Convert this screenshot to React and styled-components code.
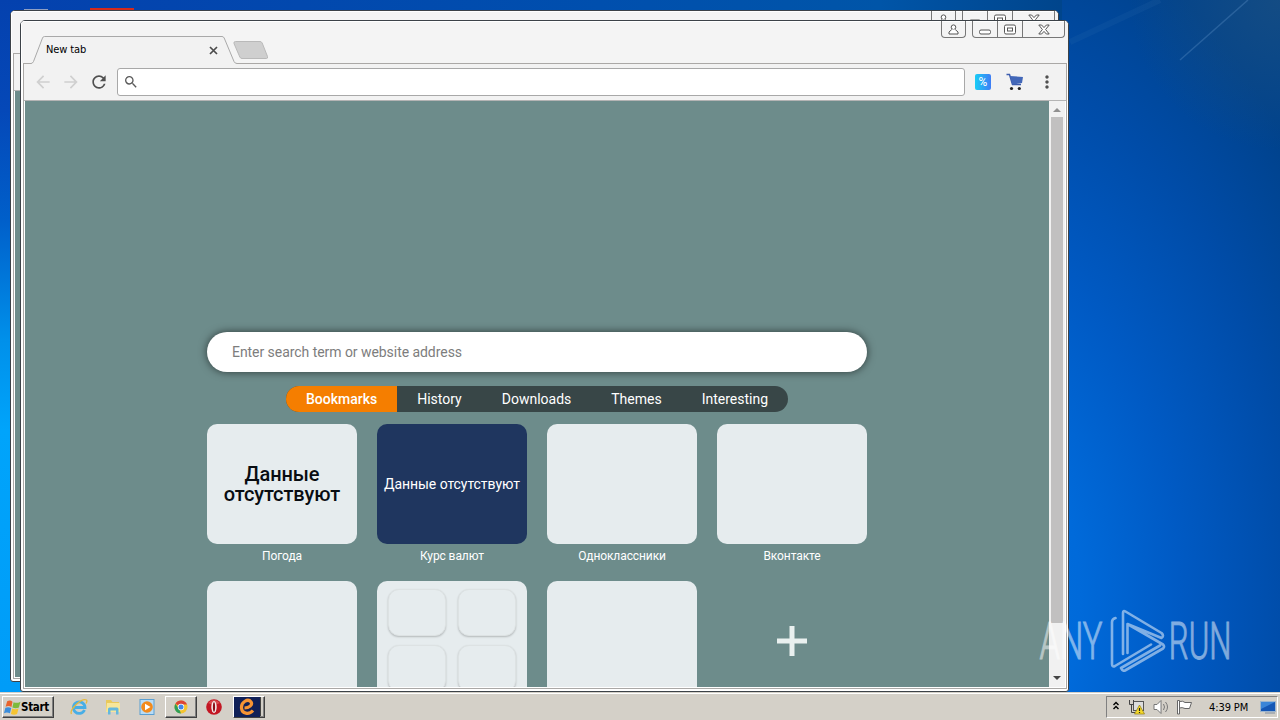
import React from 'react';
import styled, { createGlobalStyle } from 'styled-components';
import { MdArrowBack, MdArrowForward, MdRefresh, MdSearch, MdMoreVert } from 'react-icons/md';

const menus = ['Bookmarks', 'History', 'Downloads', 'Themes', 'Interesting'];

const bookmarks = [
  { id: 1, title: 'Погода', type: 'weather' },
  { id: 2, title: 'Курс валют', type: 'rates' },
  { id: 3, title: 'Одноклассники' },
  { id: 4, title: 'Вконтакте' },
  { id: 5, title: '' },
  { id: 6, title: '', type: 'folder' },
  { id: 7, title: '' },
  { id: 8, title: '', type: 'add' },
];

const WindowButtons = () => (
  <Controls>
    <ControlGroup>
      <Control $width={23}>
        <svg width="11" height="11" viewBox="0 0 11 11">
          <circle cx="5.5" cy="3.2" r="2.3" />
          <path d="M3.8 5.5 L1 8 V10 H10 V8 L7.2 5.5" />
        </svg>
      </Control>
    </ControlGroup>
    <ControlGroup>
      <Control $width={24}>
        <svg width="12" height="11" viewBox="0 0 12 11">
          <rect x="0.5" y="6" width="11" height="4" rx="1.5" />
        </svg>
      </Control>
      <Control $width={25}>
        <svg width="12" height="11" viewBox="0 0 12 11">
          <rect x="0.5" y="1" width="11" height="9" rx="1.5" />
          <rect x="3.5" y="4" width="5" height="3" />
        </svg>
      </Control>
      <Control $width={42}>
        <svg width="12" height="11" viewBox="0 0 12 11">
          <path d="M0.8 1 H3.6 L6 3.6 L8.4 1 H11.2 L7.6 5.5 L11.2 10 H8.4 L6 7.4 L3.6 10 H0.8 L4.4 5.5 Z" />
        </svg>
      </Control>
    </ControlGroup>
  </Controls>
);

const Tile = ({ bookmark }) => {
  if (bookmark.type === 'add') {
    return (
      <AddTile>
        <svg width="30" height="30" viewBox="0 0 30 30">
          <path d="M15 0 V30 M0 15 H30" stroke="#e9f0ef" strokeWidth="5" />
        </svg>
      </AddTile>
    );
  }

  return (
    <div>
      <Thumb $type={bookmark.type}>
        {bookmark.type === 'weather' && <strong>Данные отсутствуют</strong>}
        {bookmark.type === 'rates' && <span>Данные отсутствуют</span>}
        {bookmark.type === 'folder' && [1, 2, 3, 4].map((n) => <FolderItem key={n} />)}
      </Thumb>
      <TileTitle>{bookmark.title}</TileTitle>
    </div>
  );
};

const NewTabPage = () => (
  <>
    <SearchBox placeholder="Enter search term or website address" />
    <Menu>
      {menus.map((menu) => (
        <MenuItem key={menu} $active={menu === 'Bookmarks'}>{menu}</MenuItem>
      ))}
    </Menu>
    <Tiles>
      {bookmarks.map((bookmark) => (
        <Tile key={bookmark.id} bookmark={bookmark} />
      ))}
    </Tiles>
  </>
);

const BrowserTab = () => (
  <>
    <Tab>
      <TabShape width="206" height="28" viewBox="0 0 206 28">
        <path d="M0 28 V27.5 Q1.5 27.5 2.5 25.5 L11.5 2 Q12 0.5 13.5 0.5 H191 Q192.5 0.5 193.2 2 L203 25.5 Q204 27.5 206 27.5 V28 Z" fill="#f2f2f2" />
        <path d="M0 27.5 Q1.5 27.5 2.5 25.5 L11.5 2 Q12 0.5 13.5 0.5 H191 Q192.5 0.5 193.2 2 L203 25.5 Q204 27.5 206 27.5" fill="none" stroke="#a9a9a9" />
      </TabShape>
      <TabTitle>New tab</TabTitle>
      <CloseIcon width="9" height="9" viewBox="0 0 9 9">
        <path d="M1 1 L8 8 M8 1 L1 8" stroke="#4c4c4c" strokeWidth="1.7" />
      </CloseIcon>
    </Tab>
    <NewTabButton width="36" height="19" viewBox="0 0 36 19">
      <path d="M2.5 0.5 H27 Q28.5 0.5 29.2 2 L34.5 15.5 Q35 17.5 33.5 17.5 H9 Q7.5 17.5 6.8 16 L1 2.5 Q0.5 0.5 2.5 0.5 Z" fill="#cfcfcf" stroke="#b9b9b9" />
    </NewTabButton>
  </>
);

const BrowserWindow = ({ left, top, active }) => (
  <Window $left={left} $top={top}>
    <TitleBar>
      {active && <BrowserTab />}
      <WindowButtons />
    </TitleBar>
    <Body>
      <Toolbar>
        <MdArrowBack size={20} color="#d0d0d0" />
        <MdArrowForward size={20} color="#d0d0d0" />
        <MdRefresh size={20} color="#505050" />
        <Omnibox>
          <MdSearch size={16} color="#5a5a5a" />
        </Omnibox>
        {active && <Percent>%</Percent>}
        <CartIcon width="18" height="18" viewBox="0 0 18 18">
          <path d="M0.5 1.5 H3.5 L6.5 11.5 H15" fill="none" stroke="#3c5cae" strokeWidth="1.5" />
          <path d="M4 3 L17 4 L16 10 L6.5 11.5 Z" fill="#4267b8" />
          <circle cx="5.5" cy="15.5" r="1.6" fill="#222" />
          <circle cx="13.3" cy="15.5" r="1.6" fill="#222" />
        </CartIcon>
        <MdMoreVert size={20} color="#505050" />
      </Toolbar>
      <Content>
        <Page>{active && <NewTabPage />}</Page>
        <Scrollbar>
          <svg width="16" height="16" viewBox="0 0 16 16"><path d="M4 11 L8 7 L12 11 Z" fill="#909090" /></svg>
          <ScrollThumb />
          <svg width="16" height="16" viewBox="0 0 16 16"><path d="M4 5 L8 9 L12 5 Z" fill="#454545" /></svg>
        </Scrollbar>
      </Content>
    </Body>
  </Window>
);

const Watermark = () => (
  <WatermarkBox>
    <WatermarkWord $width={64} $scale={0.63}>
      <span>ANY</span>
    </WatermarkWord>
    <svg width="58" height="64" viewBox="74 4 58 64">
      <path
        d="M79.5 14 Q76 15 76 18 V60 Q76 63.5 79 62 L115 40.5
          M87 50 V9 Q87 6 89.5 7.5 L125.5 29 Q128.5 32 125.5 34 L91.5 20 V49
          M91.5 20 L127 40.5 Q129 42.5 127 44.5 L89 66.5 Q86.5 67.5 85 64 L124 41.5"
        fill="none"
        stroke="#fff"
        strokeWidth="2.6"
        strokeLinejoin="round"
        strokeLinecap="round"
      />
    </svg>
    <WatermarkWord $width={59} $scale={0.6}>
      <span>RUN</span>
    </WatermarkWord>
  </WatermarkBox>
);

const WindowsFlag = () => (
  <svg width="17" height="17" viewBox="0 0 16 16">
    <path d="M3 2 Q6 0.5 8 2.5 L7 7.5 Q4.5 6 1.5 7.3 Z" fill="#e8632c" />
    <path d="M9 3 Q12 4.5 15.5 2.5 L14 8 Q11 9.5 7.9 8 Z" fill="#7dba3b" />
    <path d="M1.3 8.3 Q4 7 6.8 8.5 L5.6 13.5 Q3 12 0 13.3 Z" fill="#3b8ddb" />
    <path d="M7.7 9 Q10.5 10.5 13.7 9 L12.3 14 Q9.5 15.5 6.5 14 Z" fill="#f6c431" />
  </svg>
);

const QuickLaunch = () => (
  <>
    <TaskItem>
      <svg width="18" height="18" viewBox="0 0 18 18">
        <path d="M14.5 12 A5.8 5.8 0 1 1 15 9.5 H5" fill="none" stroke="#48aee6" strokeWidth="2.8" />
        <path d="M1.5 16 C-1 12 11 0 16.5 2 Q17.5 3 16 5.5" fill="none" stroke="#e6b93d" strokeWidth="1.3" />
      </svg>
    </TaskItem>
    <TaskItem>
      <svg width="18" height="18" viewBox="0 0 18 18">
        <path d="M2 2 H7 L8.5 4 H15 V14 H2 Z" fill="#e9c95b" />
        <path d="M3 5 H16 V14 H2 Z" fill="#f7e69a" />
        <path d="M4 16.5 V11 Q4 9.5 5.5 9.5 H13 Q14.5 9.5 14.5 11 V16.5 H12 V12.5 H6.5 V16.5 Z" fill="#65b8dd" />
      </svg>
    </TaskItem>
    <TaskItem>
      <svg width="18" height="18" viewBox="0 0 18 18">
        <rect x="2" y="1.5" width="14" height="15" fill="#b8dcf6" stroke="#5a9fd2" />
        <circle cx="9" cy="9" r="5.8" fill="#f28a1c" />
        <path d="M7 5.7 L12.5 9 L7 12.3 Z" fill="#fff" />
      </svg>
    </TaskItem>
    <TaskItem $raised>
      <svg width="16" height="16" viewBox="0 0 16 16">
        <circle cx="8" cy="8" r="6.5" fill="#f4c430" />
        <path d="M8 8 L2.4 4.7 A6.5 6.5 0 0 1 14 5.5 L8 5.5 Z" fill="#dc4437" />
        <path d="M2.4 4.7 L6 10 L8 14.5 A6.5 6.5 0 0 1 2.4 4.7 Z" fill="#2f9e57" />
        <circle cx="8" cy="8" r="3.2" fill="#fff" />
        <circle cx="8" cy="8" r="2.5" fill="#4285e8" />
      </svg>
    </TaskItem>
    <TaskItem>
      <svg width="18" height="18" viewBox="0 0 18 18">
        <circle cx="9" cy="9" r="7.8" fill="#c31623" />
        <path d="M3 5 Q9 -1 15 5 Q9 8 3 5 Z" fill="#e66b6b" opacity="0.6" />
        <ellipse cx="9" cy="9" rx="2.7" ry="6" fill="#f4eeee" />
        <ellipse cx="9" cy="9" rx="1.1" ry="4.8" fill="#8c0d18" />
      </svg>
    </TaskItem>
    <TaskItem $raised $dark>
      <svg width="26" height="20" viewBox="0 0 26 20">
        <rect width="26" height="20" fill="#102057" />
        <path d="M10.5 11 C15 11 19 8 17 5 C14 1 7 5 7.5 11 C8 17 15 18 19 13.5" fill="none" stroke="#f79433" strokeWidth="3.2" />
      </svg>
    </TaskItem>
  </>
);

const Taskbar = () => (
  <Bar>
    <StartButton>
      <WindowsFlag />
      Start
    </StartButton>
    <QuickLaunch />
    <Tray>
      <svg width="8" height="12" viewBox="0 0 8 12">
        <path d="M1.5 4 L4 1.5 L6.5 4 M1.5 8 L4 5.5 L6.5 8" fill="none" stroke="#000" strokeWidth="1.4" />
      </svg>
      <svg width="17" height="16" viewBox="0 0 17 16">
        <rect x="4.5" y="2.5" width="10" height="9" fill="#ddd" stroke="#555" />
        <path d="M0.5 1 V5.5 H4.5 V1 M2.5 5.5 V13.5 H6" fill="none" stroke="#444" />
        <path d="M10.5 6 L15.5 15 H5.5 Z" fill="#f4d82a" stroke="#8f7b14" strokeWidth="0.7" />
        <path d="M10.5 9 V12 M10.5 13 V14" stroke="#222" strokeWidth="1.2" />
      </svg>
      <svg width="17" height="16" viewBox="0 0 17 16">
        <path d="M1 5.5 H4 L8 1.5 V14.5 L4 10.5 H1 Z" fill="#fff" stroke="#777" />
        <path d="M10.5 5 Q12.5 8 10.5 11 M12.5 3 Q16.5 8 12.5 13" fill="none" stroke="#777" />
      </svg>
      <svg width="17" height="16" viewBox="0 0 17 16">
        <path d="M0.5 15 V1.5 H2.5 V15 Z M2.5 2.5 Q6 1.5 8 3.5 H14.5 L12.5 9.5 H8 Q5 8 2.5 9 Z" fill="#fff" stroke="#666" />
      </svg>
      <Clock>4:39 PM</Clock>
      <svg width="17" height="14" viewBox="0 0 17 14">
        <rect x="0.5" y="1.5" width="15" height="10" fill="#1557b5" stroke="#9db5ce" />
        <path d="M1 2 H15 L1 9 Z" fill="#3b85d8" />
        <path d="M5 13 H15" stroke="#7f8da0" />
      </svg>
    </Tray>
  </Bar>
);

const App = () => (
  <Desktop>
    <GlobalStyle />
    <Rays width="220" height="120" viewBox="0 0 220 120">
      <path d="M120 60 L188 0" stroke="#5d91c7" strokeWidth="1.5" opacity="0.35" />
      <path d="M10 42 L100 0" stroke="#3f7ab5" strokeWidth="6" opacity="0.12" />
    </Rays>
    <ShortcutEdge $left={24} $width={24} $color="#8f9fc4" $height={1} />
    <ShortcutEdge $left={90} $width={44} $color="#d42a1c" $height={2} />
    <BrowserWindow left={10} top={10} />
    <BrowserWindow left={20} top={20} active />
    <Taskbar />
    <Watermark />
  </Desktop>
);

const GlobalStyle = createGlobalStyle`
  * {
    box-sizing: border-box;
  }
  body {
    margin: 0;
    overflow: hidden;
    font-family: Roboto, 'Noto Sans', sans-serif;
  }
  svg {
    display: block;
    flex-shrink: 0;
  }
`;

const Desktop = styled.div`
  position: relative;
  width: 1280px;
  height: 720px;
  overflow: hidden;
  display: flex;
  flex-direction: column;
  justify-content: flex-end;
  background:
    linear-gradient(180deg, #0441ae 0, #0548b8 110px, #005fca 220px, #0090ea 340px, #00a4fb 430px, #009cf8 690px) 0 0 / 40px 100% no-repeat,
    linear-gradient(90deg, #0441ae 0, #004fae 600px, #0055a8 880px, #00458c 1060px, #00458c 100%) 0 0 / 1062px 30px no-repeat,
    radial-gradient(circle at 1280px 0, rgba(28, 80, 128, 0.7) 0, rgba(16, 72, 124, 0) 150px),
    radial-gradient(ellipse 500px 820px at 960px 600px, #0074e2 0, #006ada 24%, #005ac4 44%, #004ca8 66%, #00428c 86%);
`;

const Rays = styled.svg`
  position: absolute;
  top: 0;
  left: 1060px;
`;

const ShortcutEdge = styled.div`
  position: absolute;
  left: ${({ $left }) => $left}px;
  top: ${({ $height }) => 10 - $height}px;
  width: ${({ $width }) => $width}px;
  height: ${({ $height }) => $height}px;
  background: ${({ $color }) => $color};
`;

const Window = styled.div`
  position: absolute;
  left: ${({ $left }) => $left}px;
  top: ${({ $top }) => $top}px;
  isolation: isolate;
  display: flex;
  flex-direction: column;
  width: 1049px;
  height: 672px;
  border: 1px solid #3c4248;
  border-radius: 5px 5px 3px 3px;
  background: #fff;
  overflow: hidden;
`;

const TitleBar = styled.div`
  display: flex;
  align-items: flex-end;
  height: 42px;
  flex-shrink: 0;
  padding-left: 9px;
  padding-right: 3px;
  background: #f4f4f4;
  border: 1px solid #fff;
  border-bottom: none;
  border-right: none;
`;

const Tab = styled.div`
  position: relative;
  z-index: 1;
  display: flex;
  align-items: center;
  width: 206px;
  height: 28px;
  margin-bottom: -1px;
  padding-left: 15px;
`;

const TabShape = styled.svg`
  position: absolute;
  left: 0;
  top: 0;
`;

const TabTitle = styled.span`
  z-index: 1;
  width: 163px;
  padding-bottom: 2px;
  font: 11px 'DejaVu Sans Condensed', 'DejaVu Sans', sans-serif;
  letter-spacing: -0.1px;
  color: #000;
`;

const CloseIcon = styled.svg`
  z-index: 1;
`;

const NewTabButton = styled.svg`
  margin: 0 0 3px -4px;
`;

const Controls = styled.div`
  display: flex;
  gap: 6px;
  align-self: flex-start;
  margin: -1px 0 0 auto;
`;

const ControlGroup = styled.div`
  display: flex;
  height: 17px;
  border: 1px solid #777;
  border-top: none;
  border-radius: 0 0 4px 4px;
`;

const Control = styled.div`
  display: flex;
  align-items: center;
  justify-content: center;
  width: ${({ $width }) => $width}px;
  & + & {
    border-left: 1px solid #777;
  }
  svg {
    fill: #fff;
    stroke: #555;
  }
`;

const Body = styled.div`
  flex: 1;
  min-height: 0;
  display: flex;
  flex-direction: column;
  width: 1044px;
  margin: 0 0 2px 2px;
  border: 1px solid #aaa8a6;
`;

const Toolbar = styled.div`
  display: flex;
  align-items: center;
  gap: 8px;
  height: 37px;
  flex-shrink: 0;
  padding-left: 9px;
  border-bottom: 1px solid #b4b4b4;
  background: #f2f2f2;
`;

const Omnibox = styled.div`
  display: flex;
  align-items: center;
  width: 848px;
  height: 28px;
  margin-right: 2px;
  padding-left: 5px;
  border: 1px solid #a8a8a8;
  border-radius: 3px;
  background: #fff;
`;

const Percent = styled.div`
  width: 16px;
  height: 16px;
  margin-right: 8px;
  border-radius: 2px;
  background: linear-gradient(90deg, #18cdf6, #3f7df5);
  color: #fff;
  font-family: Roboto, sans-serif;
  font-size: 12px;
  line-height: 16px;
  text-align: center;
`;

const CartIcon = styled.svg`
  margin: 0 5px 0 -1px;
`;

const Content = styled.div`
  flex: 1;
  min-height: 0;
  display: flex;
  padding: 0 1px 1px;
`;

const Page = styled.div`
  display: flex;
  flex-direction: column;
  align-items: center;
  width: 1024px;
  padding-top: 231px;
  overflow: hidden;
  background: #6d8c8b;
`;

const SearchBox = styled.input`
  width: 660px;
  height: 40px;
  flex-shrink: 0;
  padding: 0 25px;
  border: none;
  border-radius: 20px;
  background: #fff;
  box-shadow: 0 0 8px rgba(0, 0, 0, 0.6);
  font: 14px Roboto, sans-serif;
  letter-spacing: -0.05px;
  &::placeholder {
    color: #7d7d7d;
  }
`;

const Menu = styled.div`
  display: flex;
  flex-shrink: 0;
  height: 26px;
  margin: 14px 0 12px;
  border-radius: 13px;
  overflow: hidden;
  background: #384647;
`;

const MenuItem = styled.div`
  padding: 0 20px;
  background: ${({ $active }) => ($active ? '#f57e00' : 'transparent')};
  color: #fff;
  font-size: 14px;
  font-weight: ${({ $active }) => ($active ? 500 : 400)};
  line-height: 26px;
`;

const Tiles = styled.div`
  display: grid;
  grid-template-columns: repeat(4, 150px);
  grid-auto-rows: 157px;
  column-gap: 20px;
`;

const Thumb = styled.div`
  display: flex;
  flex-wrap: wrap;
  align-items: center;
  align-content: center;
  justify-content: center;
  gap: 9px 12px;
  width: 150px;
  height: 120px;
  padding-bottom: ${({ $type }) => ($type === 'folder' ? 2 : 0)}px;
  border-radius: 10px;
  background: ${({ $type }) => ($type === 'rates' ? '#1f365f' : '#e6ecee')};
  text-align: center;
  strong {
    color: #090d12;
    font-size: 20px;
    font-weight: 500;
    line-height: 20px;
    letter-spacing: -0.1px;
  }
  span {
    color: #fff;
    font-size: 14px;
    letter-spacing: -0.05px;
    white-space: nowrap;
  }
`;

const FolderItem = styled.div`
  width: 58px;
  height: 47px;
  border-radius: 11px;
  border: 1px solid #dde2e3;
  box-shadow: 0 1px 2px rgba(0, 0, 0, 0.22);
  background: #e6ecee;
`;

const TileTitle = styled.div`
  height: 24px;
  color: #fff;
  font-size: 12px;
  line-height: 24px;
  letter-spacing: -0.1px;
  text-align: center;
`;

const AddTile = styled.div`
  display: flex;
  align-items: center;
  justify-content: center;
  height: 120px;
`;

const Scrollbar = styled.div`
  display: flex;
  flex-direction: column;
  width: 16px;
  background: #f1f1f1;
  svg:last-child {
    margin-top: auto;
  }
`;

const ScrollThumb = styled.div`
  width: 12px;
  height: 506px;
  margin-left: 2px;
  background: #c1c0c0;
`;

const Bar = styled.div`
  position: relative;
  display: flex;
  align-items: center;
  height: 28px;
  padding: 2px 2px 0;
  background: #d4d0c8;
  box-shadow: inset 0 1px #d4d0c8, inset 0 2px #fff;
`;

const StartButton = styled.div`
  display: flex;
  align-items: center;
  width: 52px;
  height: 22px;
  margin-right: 8px;
  padding-left: 1px;
  border: 1px solid;
  border-color: #fff #404040 #404040 #fff;
  box-shadow: inset -1px -1px #808080;
  font: bold 11.5px 'DejaVu Sans Condensed', 'DejaVu Sans', sans-serif;
  letter-spacing: -0.3px;
  color: #000;
`;

const TaskItem = styled.div`
  display: flex;
  align-items: center;
  justify-content: center;
  width: ${({ $raised }) => ($raised ? 32 : 34)}px;
  height: 22px;
  border: ${({ $raised }) => ($raised ? '1px solid' : 'none')};
  border-color: #fff #404040 #404040 #fff;
  box-shadow: ${({ $raised }) => ($raised ? 'inset -1px -1px #808080' : 'none')};
  margin-left: ${({ $raised, $dark }) => ($raised && !$dark ? '1px' : 0)};
  ${({ $dark }) => $dark && `
    justify-content: flex-start;
    margin-left: 2px;
    box-shadow: inset -1px -1px #808080, inset -3px 0 #d4d0c8, inset -4px 0 #404040;
  `}
`;

const Tray = styled.div`
  display: flex;
  align-items: center;
  gap: 7px;
  width: 172px;
  height: 22px;
  margin-left: auto;
  padding-left: 5px;
  border: 1px solid;
  border-color: #808080 #fff #fff #808080;
  svg:first-child {
    margin-right: 2px;
  }
`;

const Clock = styled.span`
  width: 43px;
  margin: 0 3px 0 8px;
  font: 11px 'DejaVu Sans Condensed', 'DejaVu Sans', sans-serif;
  letter-spacing: -0.1px;
  white-space: nowrap;
  color: #000;
`;

const WatermarkBox = styled.div`
  position: absolute;
  left: 1039px;
  top: 608px;
  display: flex;
  align-items: center;
  height: 64px;
  opacity: 0.5;
  svg {
    margin: 0 3px 0 7px;
  }
`;

const WatermarkWord = styled.div`
  display: flex;
  justify-content: center;
  width: ${({ $width }) => $width}px;
  padding-top: 4px;
  span {
    color: #fff;
    font-size: 52px;
    font-weight: 300;
    line-height: 64px;
    -webkit-text-stroke: 1px #fff;
    transform: scaleX(${({ $scale }) => $scale});
  }
`;

export default App;
